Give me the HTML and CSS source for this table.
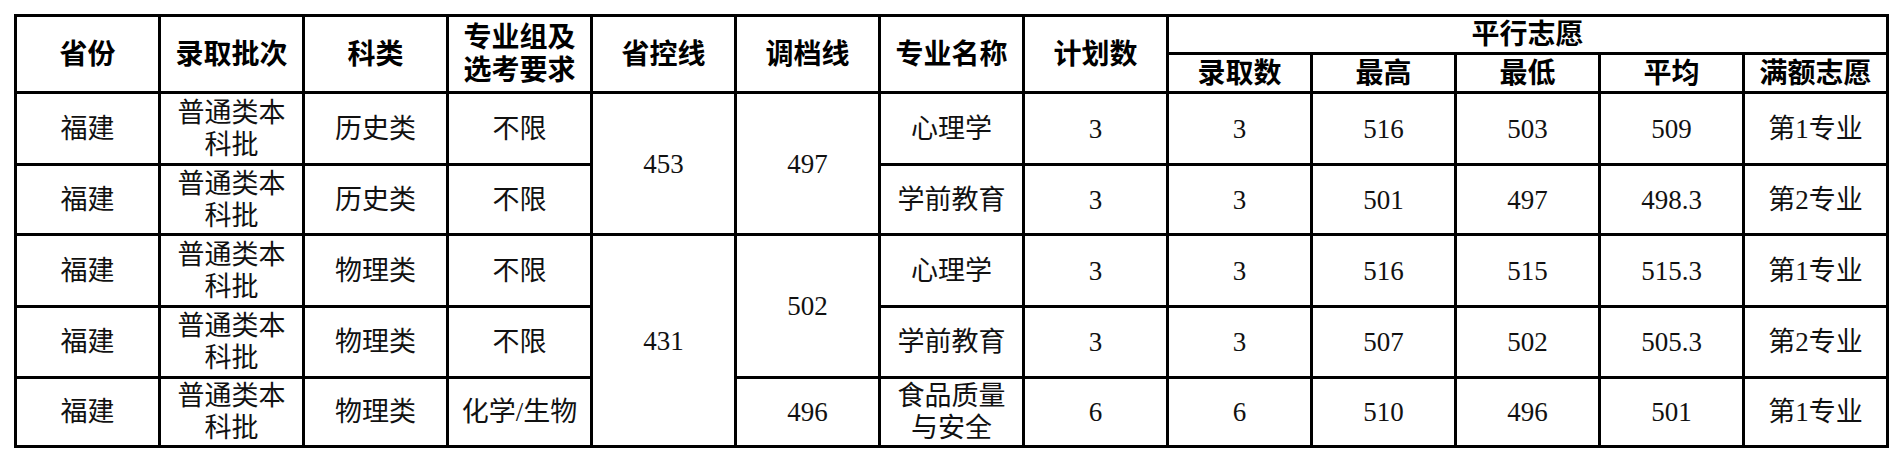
FILE: index.html
```html
<!DOCTYPE html>
<html lang="zh-CN">
<head>
<meta charset="utf-8">
<title>福建录取情况</title>
<link rel="stylesheet" href="styles.css">
</head>
<body>
<table class="score-table">
  <colgroup>
    <col class="c"><col class="c"><col class="c"><col class="c"><col class="c"><col class="c"><col class="c"><col class="c"><col class="c"><col class="c"><col class="c"><col class="c"><col class="c">
  </colgroup>
  <thead>
    <tr class="h1">
      <th rowspan="2">省份</th>
      <th rowspan="2">录取批次</th>
      <th rowspan="2">科类</th>
      <th rowspan="2" class="two">专业组及<br>选考要求</th>
      <th rowspan="2">省控线</th>
      <th rowspan="2">调档线</th>
      <th rowspan="2">专业名称</th>
      <th rowspan="2">计划数</th>
      <th colspan="5">平行志愿</th>
    </tr>
    <tr class="h2">
      <th>录取数</th>
      <th>最高</th>
      <th>最低</th>
      <th>平均</th>
      <th>满额志愿</th>
    </tr>
  </thead>
  <tbody>
    <tr class="r1">
      <td>福建</td>
      <td class="two">普通类本<br>科批</td>
      <td>历史类</td>
      <td>不限</td>
      <td rowspan="2">453</td>
      <td rowspan="2">497</td>
      <td>心理学</td>
      <td>3</td>
      <td>3</td>
      <td>516</td>
      <td>503</td>
      <td>509</td>
      <td>第1专业</td>
    </tr>
    <tr class="r2">
      <td>福建</td>
      <td class="two">普通类本<br>科批</td>
      <td>历史类</td>
      <td>不限</td>
      <td>学前教育</td>
      <td>3</td>
      <td>3</td>
      <td>501</td>
      <td>497</td>
      <td>498.3</td>
      <td>第2专业</td>
    </tr>
    <tr class="r3">
      <td>福建</td>
      <td class="two">普通类本<br>科批</td>
      <td>物理类</td>
      <td>不限</td>
      <td rowspan="3">431</td>
      <td rowspan="2">502</td>
      <td>心理学</td>
      <td>3</td>
      <td>3</td>
      <td>516</td>
      <td>515</td>
      <td>515.3</td>
      <td>第1专业</td>
    </tr>
    <tr class="r4">
      <td>福建</td>
      <td class="two">普通类本<br>科批</td>
      <td>物理类</td>
      <td>不限</td>
      <td>学前教育</td>
      <td>3</td>
      <td>3</td>
      <td>507</td>
      <td>502</td>
      <td>505.3</td>
      <td>第2专业</td>
    </tr>
    <tr class="r5">
      <td>福建</td>
      <td class="two">普通类本<br>科批</td>
      <td>物理类</td>
      <td>化学/生物</td>
      <td>496</td>
      <td class="two">食品质量<br>与安全</td>
      <td>6</td>
      <td>6</td>
      <td>510</td>
      <td>496</td>
      <td>501</td>
      <td>第1专业</td>
    </tr>
  </tbody>
</table>
</body>
</html>
```
FILE: styles.css
```css
html, body {
  margin: 0;
  padding: 0;
  background: #ffffff;
}

.score-table {
  margin: 14px 0 0 14px;
  width: 1875px;
  table-layout: fixed;
  border-collapse: separate;
  border-spacing: 0;
  border-top: 3px solid #000;
  border-left: 3px solid #000;
  font-family: "Liberation Serif", "Noto Sans CJK SC", serif;
  color: #111;
}

.score-table col.c {
  width: 144px;
}

.score-table th,
.score-table td {
  padding: 0;
  border-right: 3px solid #000;
  border-bottom: 3px solid #000;
  text-align: center;
  vertical-align: middle;
  white-space: nowrap;
  overflow: hidden;
}

.score-table th {
  font-family: "Liberation Serif", "Noto Sans CJK SC", serif;
  font-weight: 700;
  font-size: 28px;
  line-height: 33px;
  color: #000;
}

.score-table td {
  font-size: 27px;
  line-height: 32px;
  font-weight: 400;
}

.score-table td.two {
  line-height: 32px;
}

.score-table th.two {
  line-height: 33px;
}

.h1 { height: 38px; }
.h2 { height: 39px; }
.r1 { height: 72px; }
.r2 { height: 70px; }
.r3 { height: 72px; }
.r4 { height: 71px; }
.r5 { height: 69px; }
```
